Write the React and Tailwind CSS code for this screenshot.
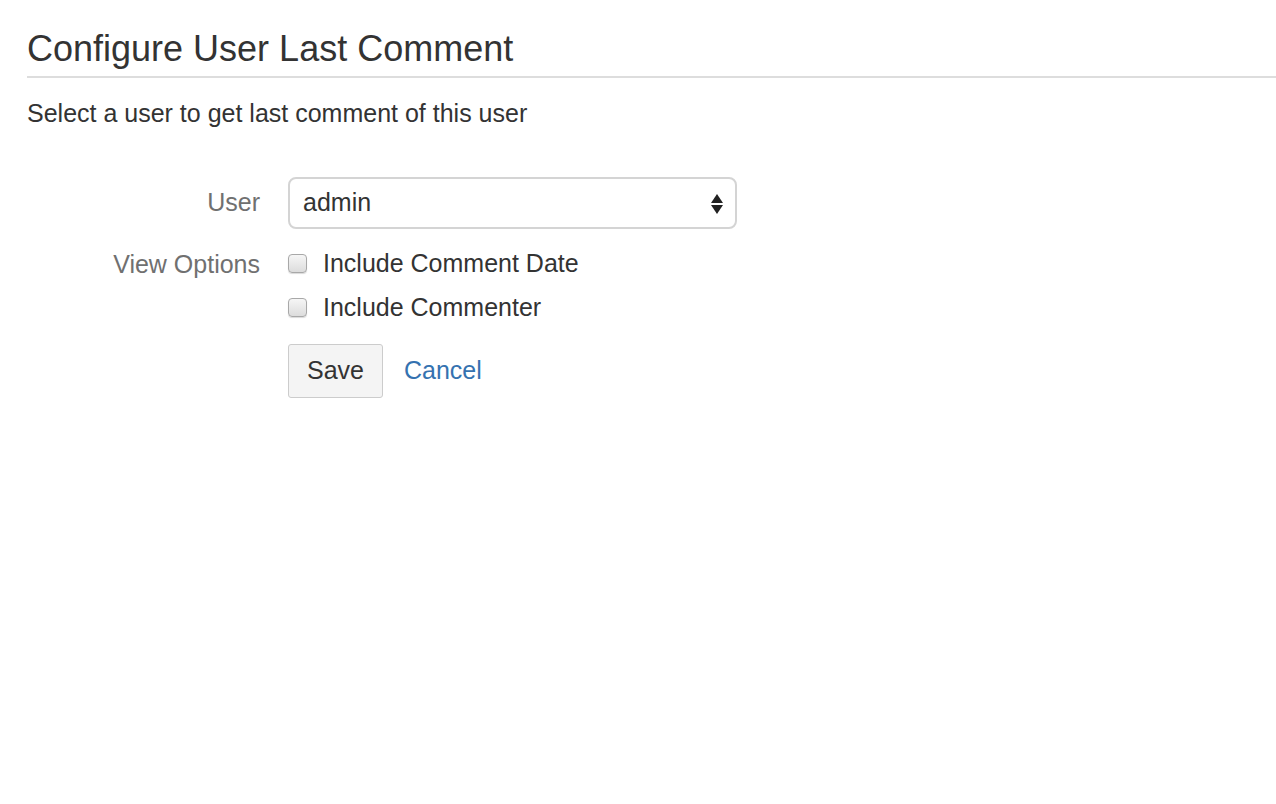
export default function App() {
  return (
    <div className="min-h-screen bg-white pl-[27px] font-['Liberation_Sans',Arial,sans-serif] text-[#333]">
      <h1 className="pt-[29px] pb-[7px] text-[36px] leading-[1.1] font-normal border-b-2 border-[#dddddd]">
        Configure User Last Comment
      </h1>
      <p className="mt-[17px] text-[25px] leading-[36px]">Select a user to get last comment of this user</p>

      <div className="mt-[46px] flex flex-col">
        <div className="flex items-center">
          <label className="w-[233px] text-right text-[25px] text-[#707070]">User</label>
          <div className="ml-[28px] relative w-[449px] h-[52px] rounded-[8px] border-2 border-[#d4d4d4] bg-white flex items-center pl-[13px] text-[25px]">
            admin
            <svg className="absolute right-[12px] top-[15px]" width="12" height="20" viewBox="0 0 12 20">
              <polygon points="6,0 12,9 0,9" fill="#222" />
              <polygon points="0,11 12,11 6,20" fill="#222" />
            </svg>
          </div>
        </div>

        <div className="mt-[17px] flex items-start">
          <div className="w-[233px] text-right text-[25px] leading-[36px] text-[#707070]">View Options</div>
          <div className="ml-[28px] flex flex-col gap-[8px]">
            {["Include Comment Date", "Include Commenter"].map((t) => (
              <label key={t} className="flex items-center h-[36px] text-[25px]">
                <span className="w-[19px] h-[19px] rounded-[4px] border border-[#a8a8a8] bg-gradient-to-b from-[#f6f6f6] to-[#dcdcdc] shadow-[0_1px_1px_rgba(0,0,0,0.15)]" />
                <span className="ml-[16px]">{t}</span>
              </label>
            ))}
            <div className="mt-[10px] flex items-center">
              <button className="h-[54px] w-[95px] rounded-[3px] border border-[#cccccc] bg-[#f4f4f4] text-[25px] text-[#333]">
                Save
              </button>
              <a className="ml-[21px] text-[25px] text-[#3572b0]">Cancel</a>
            </div>
          </div>
        </div>
      </div>
    </div>
  );
}
